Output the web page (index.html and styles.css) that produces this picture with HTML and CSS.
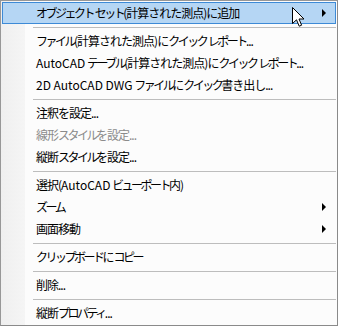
FILE: index.html
```html
<!DOCTYPE html>
<html lang="ja">
<head>
    <meta charset="UTF-8">
    <meta name="viewport" content="width=device-width, initial-scale=1.0">
    <title>Context Menu</title>
    <link rel="stylesheet" href="styles.css">
</head>
<body>

    <div class="menu">
        <ul class="items">
            <li class="item active has-sub"><span class="k">オブジェクト</span> <span class="k">セット</span>(計算された測点)に追加</li>
            <li class="sep"></li>
            <li class="item"><span class="k">ファイル</span>(計算された測点)に<span class="k">クイック</span> <span class="k">レポート</span>...</li>
            <li class="item"><span class="lat">AutoCAD</span> <span class="k">テーブル</span>(計算された測点)に<span class="k">クイック</span> <span class="k">レポート</span>...</li>
            <li class="item"><span class="lat">2D AutoCAD DWG</span> <span class="k">ファイル</span>に<span class="k">クイック</span>書き出し...</li>
            <li class="sep"></li>
            <li class="item">注釈を設定...</li>
            <li class="item disabled">線形<span class="k">スタイル</span>を設定...</li>
            <li class="item">縦断<span class="k">スタイル</span>を設定...</li>
            <li class="sep"></li>
            <li class="item">選択(<span class="lat">AutoCAD</span> <span class="k">ビューポート</span>内)</li>
            <li class="item has-sub"><span class="k">ズーム</span></li>
            <li class="item has-sub">画面移動</li>
            <li class="sep"></li>
            <li class="item"><span class="k">クリップボード</span>に<span class="k">コピー</span></li>
            <li class="sep"></li>
            <li class="item">削除...</li>
            <li class="sep"></li>
            <li class="item">縦断<span class="k">プロパティ</span>...</li>
        </ul>

        <!-- mouse pointer over the first item -->
        <svg class="cursor" width="13" height="20" viewBox="0 0 13 20">
            <path d="M0.5 0.5 L0.5 16.5 L4.5 12.8 L7.2 19.2 L9.6 18.2 L7 12 L12 12 Z" fill="#fff" stroke="#000" stroke-width="1" stroke-linejoin="miter"/>
        </svg>
    </div>

</body>
</html>
```
FILE: styles.css
```css
body {
    margin: 0;
    background-color: #fff;
    font-family: "Noto Sans CJK JP", sans-serif;
}

.menu {
    position: relative;
    box-sizing: border-box;
    width: 338px;
    height: 326px;
    padding: 1px;
    border: 1px solid #979797;
    border-right-color: #8a8a8a;
    border-bottom-color: #8a8a8a;
    background: linear-gradient(to right, #efefef 0, #f5f5f5 24px, #fcfcfc 24px);
}

.items {
    list-style: none;
    margin: 0;
    padding: 0;
}

.item {
    position: relative;
    box-sizing: border-box;
    height: 22px;
    padding-left: 33px;
    border: 1px solid transparent;
    font-size: 12px;
    line-height: 20px;
    letter-spacing: -1px;
    color: #000;
    white-space: nowrap;
}

/* katakana runs are set tighter, like the UI font does */
.k {
    letter-spacing: -2.5px;
}

/* latin runs keep their normal width */
.lat {
    letter-spacing: 0;
}

.item.active {
    background-color: #b5d6f4;
    border-color: #3d8ad6;
}

.item.disabled {
    color: #8b8b8b;
}

.has-sub::after {
    content: "";
    position: absolute;
    right: 9px;
    top: 6px;
    border-left: 4px solid #000;
    border-top: 4px solid transparent;
    border-bottom: 4px solid transparent;
}

.sep {
    height: 1px;
    margin: 3px 0 2px 31px;
    background-color: #bdbdbd;
}

.cursor {
    position: absolute;
    left: 291px;
    top: 6px;
}
```
